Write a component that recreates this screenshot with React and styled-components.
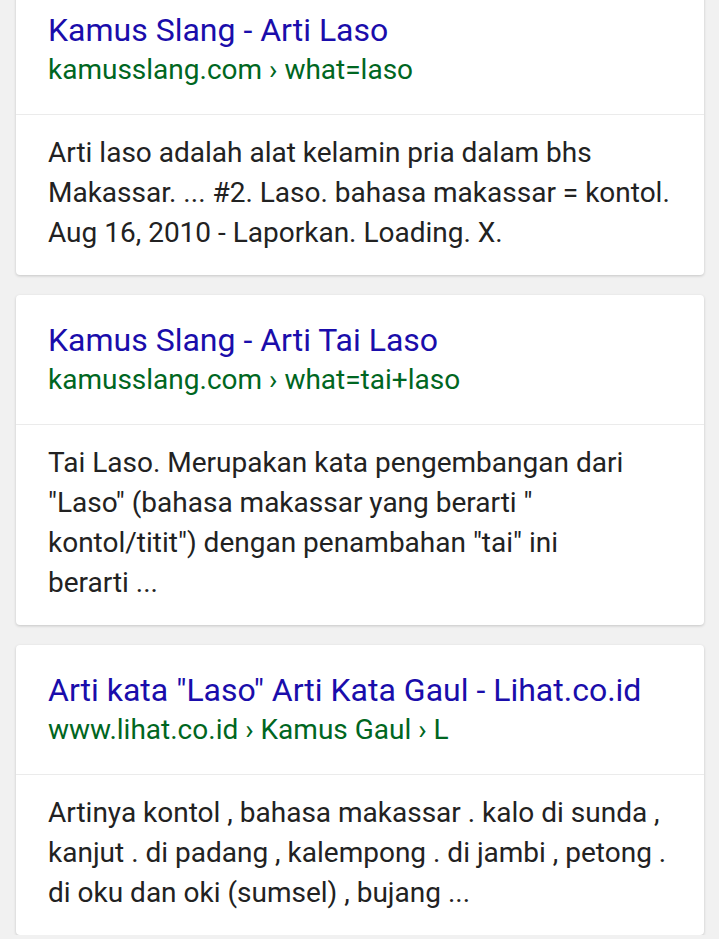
import React from 'react';
import styled, { createGlobalStyle } from 'styled-components';

const GlobalStyle = createGlobalStyle`
    html, body {
        margin: 0;
        padding: 0;
        background: #f1f1f1;
        overflow: hidden;
    }
`;

const Page = styled.div`
    display: flex;
    flex-direction: column;
    gap: 20px;
    padding: 0 15px 0 16px;
    margin-top: -15px;
    font-family: Roboto, "Liberation Sans", sans-serif;
`;

const Card = styled.div`
    background: #fff;
    border-radius: 4px;
    box-shadow: 0 1px 3px rgba(0, 0, 0, 0.18);

    .head {
        padding: 25px 32px 24px;
        border-bottom: 1px solid #ebebeb;
    }

    h3 {
        margin: 0;
        font-weight: 400;
        font-size: 32px;
        line-height: 40px;
        color: #1a0dab;
        white-space: nowrap;
    }

    .url {
        margin: 0;
        font-size: 28px;
        line-height: 40px;
        color: #006621;
        white-space: nowrap;
    }

    .snippet {
        margin: 0;
        padding: 18px 32px 22px;
        font-size: 28px;
        line-height: 40px;
        color: #222;
        white-space: nowrap;
    }
`;

const results = [
    {
        title: 'Kamus Slang - Arti Laso',
        url: 'kamusslang.com › what=laso',
        lines: [
            'Arti laso adalah alat kelamin pria dalam bhs',
            'Makassar. ... #2. Laso. bahasa makassar = kontol.',
            'Aug 16, 2010 - Laporkan. Loading. X.',
        ],
    },
    {
        title: 'Kamus Slang - Arti Tai Laso',
        url: 'kamusslang.com › what=tai+laso',
        lines: [
            'Tai Laso. Merupakan kata pengembangan dari',
            '"Laso" (bahasa makassar yang berarti "',
            'kontol/titit") dengan penambahan "tai" ini',
            'berarti ...',
        ],
    },
    {
        title: 'Arti kata "Laso" Arti Kata Gaul - Lihat.co.id',
        url: 'www.lihat.co.id › Kamus Gaul › L',
        lines: [
            'Artinya kontol , bahasa makassar . kalo di sunda ,',
            'kanjut . di padang , kalempong . di jambi , petong .',
            'di oku dan oki (sumsel) , bujang ...',
        ],
    },
];

const App = () => {
    return (
        <>
            <GlobalStyle />
            <Page>
                {results.map(({ title, url, lines }) => (
                    <Card key={title}>
                        <div className="head">
                            <h3>{title}</h3>
                            <p className="url">{url}</p>
                        </div>
                        <p className="snippet">
                            {lines.map((line, i) => (
                                <React.Fragment key={i}>
                                    {line}
                                    {i < lines.length - 1 && <br />}
                                </React.Fragment>
                            ))}
                        </p>
                    </Card>
                ))}
            </Page>
        </>
    );
};

export default App;
